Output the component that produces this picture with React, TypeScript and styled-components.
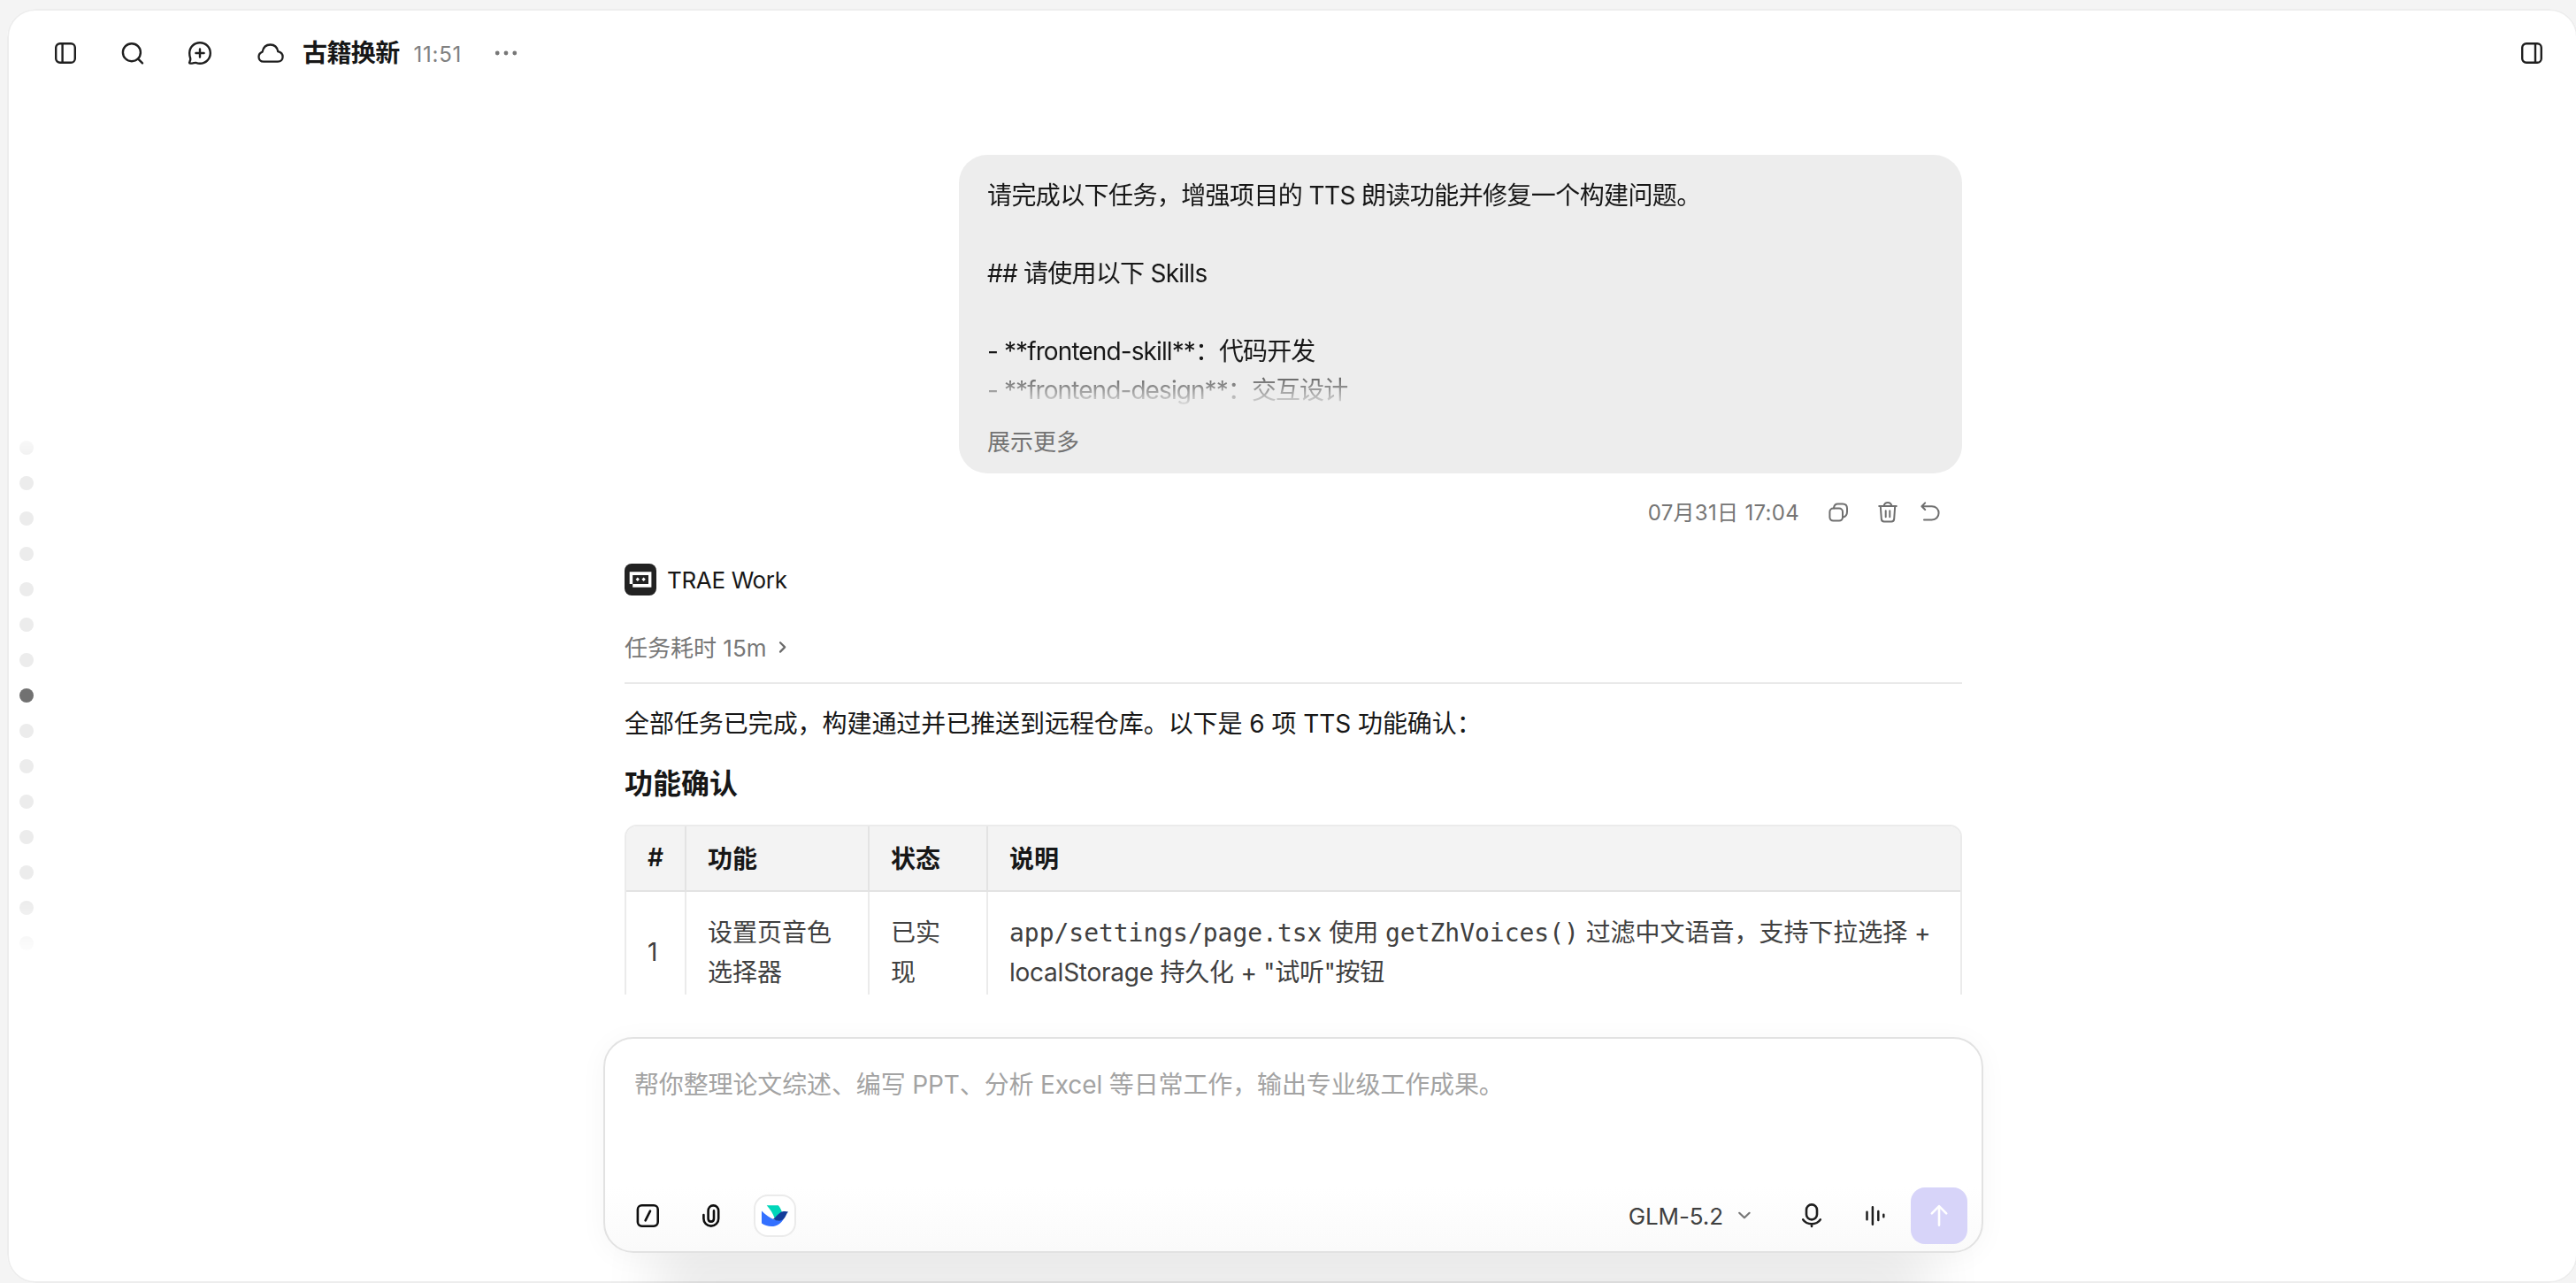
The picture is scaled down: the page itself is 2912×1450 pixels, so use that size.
import React from "react";
import styled, { createGlobalStyle, css } from "styled-components";

const GlobalStyle = createGlobalStyle`
  * { box-sizing: border-box; }
  body {
    margin: 0;
    background: #f4f4f4;
    font-family: Inter, "Noto Sans CJK SC", sans-serif;
    color: #171717;
  }
`;

const Page = styled.div`
  width: 2912px;
  height: 1450px;
  padding: 10px 0 0 8px;
  overflow: hidden;
  background: #f4f4f4;
`;

const Panel = styled.main`
  position: relative;
  display: flex;
  flex-direction: column;
  width: 2906px;
  height: 1440px;
  border-radius: 32px;
  overflow: hidden;
  background: #fff;
  &::after {
    content: "";
    position: absolute;
    inset: 0;
    border: 2px solid rgba(0, 0, 0, 0.07);
    border-radius: 32px;
    pointer-events: none;
  }
`;

const Header = styled.header`
  display: flex;
  align-items: center;
  justify-content: space-between;
  height: 100px;
  padding: 0 38px 0 52px;
`;

const Group = styled.div<{ $gap: number }>`
  display: flex;
  align-items: center;
  gap: ${(p) => p.$gap}px;
`;

const IconButton = styled.button<{ $size?: number; $color?: string }>`
  display: flex;
  align-items: center;
  justify-content: center;
  flex: none;
  width: ${(p) => p.$size ?? 28}px;
  height: ${(p) => p.$size ?? 28}px;
  padding: 0;
  border: 0;
  background: none;
  color: ${(p) => p.$color ?? "#1f1f1f"};
  svg {
    display: block;
    flex: none;
    overflow: visible;
  }
`;

const TitleBlock = styled.div`
  display: flex;
  align-items: center;
  margin-left: 2px;
`;

const Title = styled.h1`
  margin: 0 16px 0 20px;
  font-size: 28px;
  font-weight: 600;
  line-height: 40px;
  letter-spacing: -0.6px;
  color: #171717;
`;

const Time = styled.span`
  margin-right: 36px;
  padding-top: 4px;
  font-size: 24px;
  line-height: 36px;
  letter-spacing: 0.7px;
  color: #808080;
`;

const Body = styled.div`
  display: grid;
  grid-template-columns: 48px 1fr 46px;
  flex: 1;
`;

const Rail = styled.nav`
  display: flex;
  flex-direction: column;
  gap: 24px;
  height: 584px;
  margin-top: 384px;
  padding: 4px 0 0 14px;
  mask-image: linear-gradient(transparent -16px, #000 36px, #000 524px, transparent 590px);
`;

const Dot = styled.span<{ $active: boolean }>`
  flex: none;
  width: 16px;
  height: 16px;
  border-radius: 50%;
  background: ${(p) => (p.$active ? "#717171" : "#ececec")};
`;

const Column = styled.div`
  display: flex;
  flex-direction: column;
  align-items: center;
`;

const Thread = styled.section`
  display: flex;
  flex-direction: column;
  flex: none;
  width: 1512px;
  height: 1014px;
  padding-top: 65px;
  overflow: hidden;
`;

const Bubble = styled.article`
  align-self: flex-end;
  flex: none;
  width: 1134px;
  height: 360px;
  padding: 24px 32px;
  border-radius: 32px;
  background: #ededed;
`;

const BubbleText = styled.div`
  height: 264px;
  overflow: hidden;
  font-size: 28px;
  line-height: 44px;
  mask-image: linear-gradient(#000 207px, transparent 263px);
`;

const Line = styled.div<{ $tracking: number }>`
  height: 44px;
  letter-spacing: ${(p) => p.$tracking}px;
  white-space: pre;
`;

const ShowMore = styled.button`
  display: block;
  margin-top: 17px;
  padding: 0;
  border: 0;
  background: none;
  font: inherit;
  font-size: 26px;
  line-height: 40px;
  color: #737373;
`;

const Meta = styled.div`
  display: flex;
  align-items: center;
  justify-content: flex-end;
  flex: none;
  height: 44px;
  margin-top: 22px;
  padding-right: 24px;
  font-size: 24px;
  letter-spacing: 0.3px;
  color: #757575;
  > span {
    padding-bottom: 3px;
  }
  > button:nth-of-type(1),
  > button:nth-of-type(2) {
    margin-left: 32px;
  }
  > button:nth-of-type(3) {
    margin-left: 24px;
  }
`;

const Agent = styled.div`
  display: flex;
  align-items: center;
  flex: none;
  gap: 12px;
  height: 36px;
  margin-top: 36px;
  font-size: 26px;
  letter-spacing: -0.35px;
`;

const Elapsed = styled.div`
  display: flex;
  align-items: center;
  flex: none;
  gap: 13px;
  height: 40px;
  margin-top: 39px;
  font-size: 26px;
  color: #777;
  > span {
    padding-bottom: 3px;
  }
`;

const Divider = styled.hr`
  flex: none;
  width: 100%;
  height: 2px;
  margin: 19px 0 0;
  border: 0;
  background: #e9e9e9;
`;

const Paragraph = styled.p`
  margin: 23px 0 0;
  font-size: 28px;
  line-height: 45px;
  letter-spacing: -0.06px;
`;

const Heading = styled.h3`
  margin: 23px 0 0;
  font-size: 32px;
  font-weight: 600;
  line-height: 44px;
`;

const TableFrame = styled.div`
  flex: none;
  margin-top: 24px;
  border: 2px solid #ebebeb;
  border-radius: 14px;
  overflow: hidden;
`;

const Table = styled.table`
  width: 100%;
  table-layout: fixed;
  border-collapse: separate;
  border-spacing: 0;
  font-size: 28px;
`;

const Col = styled.col<{ $width?: number }>`
  ${(p) => p.$width && css`width: ${p.$width}px;`}
`;

const HeadCell = styled.th`
  height: 74px;
  padding: 0 24px 2px;
  border-right: 2px solid #e3e3e3;
  border-bottom: 2px solid #e3e3e3;
  background: #f3f3f3;
  font-weight: 600;
  text-align: left;
  &:last-child {
    border-right: 0;
  }
`;

const Cell = styled.td`
  padding: 24px 18px 24px 24px;
  border-right: 2px solid #ebebeb;
  line-height: 44.8px;
  color: #404040;
  &:last-child {
    border-right: 0;
  }
  &:nth-child(3) {
    padding-right: 26px;
  }
`;

const CellLine = styled.div<{ $tracking?: number }>`
  height: 44.8px;
  letter-spacing: ${(p) => p.$tracking ?? 0}px;
  white-space: nowrap;
`;

const Code = styled.code`
  font-family: "DejaVu Sans Mono", monospace;
  font-size: 28px;
  line-height: 1;
`;

const Composer = styled.section`
  display: flex;
  flex-direction: column;
  justify-content: space-between;
  flex: none;
  width: 1560px;
  height: 244px;
  margin-top: 48px;
  padding: 30px 16px 8px 34px;
  border: 2px solid #e2e2e2;
  border-radius: 34px;
  background: linear-gradient(#fff 70%, #fafafa);
  box-shadow:
    0 4px 32px rgba(0, 0, 0, 0.04),
    0 160px 64px -60px rgba(0, 0, 0, 0.08);
`;

const Placeholder = styled.div`
  margin-left: -1px;
  font-size: 28px;
  line-height: 44px;
  letter-spacing: -0.13px;
  color: #a3a3a3;
`;

const Toolbar = styled.div`
  display: flex;
  align-items: center;
  justify-content: space-between;
`;

const Tools = styled.div`
  display: flex;
  align-items: center;
`;

const Attach = styled(IconButton)`
  margin: 0 34px 0 44px;
`;

const AppButton = styled.button`
  display: flex;
  align-items: center;
  justify-content: center;
  width: 48px;
  height: 48px;
  padding: 0;
  border: 2px solid #ebebeb;
  border-radius: 16px;
  background: #fff;
`;

const Model = styled.button`
  display: flex;
  align-items: center;
  gap: 14px;
  margin-right: 52px;
  padding: 0;
  border: 0;
  background: none;
  font: inherit;
  font-size: 26px;
  letter-spacing: -0.1px;
  color: #404040;
`;

const Voice = styled(IconButton)`
  margin: 0 26px 0 44px;
`;

const Send = styled.button`
  display: flex;
  align-items: center;
  justify-content: center;
  width: 64px;
  height: 64px;
  padding: 0;
  border: 0;
  border-radius: 16px;
  background: #d7d4f9;
`;

const Stroke = ({ size = 28, w = 2.4, color = "currentColor", children }: {
  size?: number; w?: number; color?: string; children: React.ReactNode;
}) => (
  <svg width={size} height={size} viewBox={`0 0 ${size} ${size}`} fill="none" stroke={color}
    strokeWidth={w} strokeLinecap="round" strokeLinejoin="round">
    {children}
  </svg>
);

const SidebarIcon = ({ lineX }: { lineX: number }) => (
  <Stroke><rect x="3.2" y="3.2" width="21.6" height="21.6" rx="4.6" /><path d={`M${lineX} 3.2v21.6`} /></Stroke>
);

const SearchIcon = () => (
  <Stroke><circle cx="12.9" cy="13.2" r="10" /><path d="M20.200 20.600l4.800 4.800" /></Stroke>
);

const NewChatIcon = () => (
  <Stroke>
    <path d="M14 2.2c6.6 0 11.8 5.2 11.8 11.8S20.6 25.8 14 25.8c-1.6 0-3-.3-4.2-.8-1.7-.5-2.7.6-4.7.6H3c-.8 0-1.1-.7-.8-1.3.6-1.3 1.4-2.8 1-4.3C2.4 18 2.2 16 2.2 14 2.2 7.4 7.4 2.2 14 2.2z" />
    <path d="M14 9.4v9.2M9.4 14h9.2" />
  </Stroke>
);

const CloudIcon = () => (
  <svg width="32" height="24" viewBox="0 0 32 24" fill="none" stroke="#1f1f1f" strokeWidth="2.3" strokeLinejoin="round">
    <path d="M8 21.6C4.7 21.6 2.5 19.3 2.5 16.2c0-2.8 1.8-4.7 4.1-5.6C7.6 5.4 11 2.5 15.6 2.5c4.6 0 7.8 2.9 8.6 7.7 3.2.8 5.4 3 5.4 6 0 3.2-2.3 5.4-5.6 5.4z" />
  </svg>
);

const DotsIcon = () => (
  <svg width="28" height="28" viewBox="0 0 28 28" fill="#777">
    <circle cx="4.2" cy="14" r="2.4" /><circle cx="14" cy="14" r="2.4" /><circle cx="23.8" cy="14" r="2.4" />
  </svg>
);

const CopyIcon = () => (
  <Stroke size={24} w={2}>
    <rect x="2.4" y="7.6" width="14.6" height="14" rx="4" />
    <path d="M7 7.4C7.2 4.400 8.800 2.600 11.600 2.600h5.400c3 0 5 2 5 5v3.800c0 3-1.600 5.400-4.800 6.200" />
  </Stroke>
);

const TrashIcon = () => (
  <Stroke size={24} w={2}>
    <path d="M2.200 5h19.600M7.600 4.600C8.200 2.400 9.800 1 12 1s3.800 1.400 4.400 3.600M3.800 5l1 14.400c.1 1.900 1.200 3 3 3h8.400c1.800 0 2.900-1.100 3-3l1-14.400M9.700 10.200v7M14.300 10.200v7" />
  </Stroke>
);

const UndoIcon = () => (
  <Stroke size={24} w={2}>
    <path d="M6.200 1.400L2.400 5.200l3.800 3.800M2.600 5.200h11.200c4.600 0 7.800 3.200 7.800 7.600s-3.200 7.600-7.800 7.600H5" />
  </Stroke>
);

const AgentLogo = () => (
  <svg width="36" height="36" viewBox="0 0 36 36">
    <rect width="36" height="36" rx="8" fill="#222" />
    <path fill="#fff" fillRule="evenodd" d="M5.700 9.300h24.700v17.400H9.200V23H5.700zM9.200 13v10H27V13z" />
    <path fill="#fff" d="M14.800 15.600l2.200 2.200-2.200 2.200-2.200-2.200zM21.600 15.600l2.200 2.200-2.200 2.200-2.200-2.200z" />
  </svg>
);

const ChevronRight = () => (
  <svg width="12" height="16" viewBox="0 0 12 16" fill="none" stroke="#6b6b6b" strokeWidth="2.2" strokeLinecap="round" strokeLinejoin="round">
    <path d="M3 2.200l5.200 5.200L3 12.600" />
  </svg>
);

const SlashIcon = () => (
  <Stroke w={2.6}><rect x="2.900" y="2.300" width="22.800" height="23.400" rx="4.600" /><path d="M17 8.600l-5.400 10.800" /></Stroke>
);

const ClipIcon = () => (
  <Stroke w={2.6}>
    <path d="M5.400 13v4.200c0 4.800 3.600 8.400 8.400 8.400s8.400-3.600 8.400-8.400V8.600c0-3.600-2.400-6.200-5.800-6.200S10.600 5 10.600 8.600v8.600c0 2 1.400 3.400 3.200 3.400s3.200-1.400 3.200-3.400V8.400" />
  </Stroke>
);

const BirdLogo = () => (
  <svg width="30" height="24" viewBox="0 0 30 24">
    <path fill="#00d6b9" d="M5.700.2h13.100c2 2.300 3.400 5 4.200 8l-8 7.200C12.800 9.600 9.800 4.600 5.700.2z" />
    <path fill="#3370ff" d="M0 6.600c4.600 4.600 9.400 8 14.600 9.800 4 1.400 7.400.8 10.400-1.200C22 21 17.200 24 11.200 24 6.800 24 3 22.800 0 20.600z" />
    <path fill="#133c9a" d="M13 15.800c3.200-2.400 4.800-5 8-7.300 2.600-1.800 5.800-1.900 9-1.100-2.400 2.600-2.800 5.800-5 8.200-3 2.800-7.600 2.600-12 .2z" />
  </svg>
);

const ChevronDown = () => (
  <svg width="20" height="20" viewBox="0 0 20 20" fill="none" stroke="#777" strokeWidth="2.200" strokeLinecap="round" strokeLinejoin="round">
    <path d="M4.200 6.800l5.700 5.400 5.700-5.400" />
  </svg>
);

const MicIcon = () => (
  <Stroke w={2.6}>
    <rect x="8" y="1.400" width="12" height="17" rx="6" />
    <path d="M4.200 18.400c2 3 5.600 4.800 9.800 4.800s7.800-1.800 9.800-4.800M14 23.400v2.600" />
  </Stroke>
);

const WaveIcon = () => (
  <Stroke w={2.5}><path d="M4.500 9.800v8.400M10.900 4.200v19.600M17.300 9v10M23.300 12.800v2.400" /></Stroke>
);

const ArrowUp = () => (
  <Stroke w={2.6} color="#fff"><path d="M14 3.400v21.400M5.800 11.400L14 3.200l8.200 8.200" /></Stroke>
);

const message = [
  { text: "请完成以下任务，增强项目的 TTS 朗读功能并修复一个构建问题。", tracking: -0.6 },
  { text: "", tracking: 0 },
  { text: "## 请使用以下 Skills", tracking: -0.75 },
  { text: "", tracking: 0 },
  { text: "- **frontend-skill**：代码开发", tracking: -0.9 },
  { text: "- **frontend-design**：交互设计", tracking: -0.92 },
];

const headings = ["#", "功能", "状态", "说明"];
const turns = Array.from({ length: 15 }, (_, i) => i);

export default function App() {
  return (
    <Page lang="zh-CN">
      <GlobalStyle />
      <Panel>
        <Header>
          <Group $gap={48}>
            <IconButton aria-label="侧边栏"><SidebarIcon lineX={10.6} /></IconButton>
            <IconButton aria-label="搜索"><SearchIcon /></IconButton>
            <IconButton aria-label="新建会话"><NewChatIcon /></IconButton>
            <TitleBlock>
              <CloudIcon />
              <Title>古籍换新</Title>
              <Time>11:51</Time>
              <IconButton aria-label="更多"><DotsIcon /></IconButton>
            </TitleBlock>
          </Group>
          <IconButton aria-label="右侧面板"><SidebarIcon lineX={18} /></IconButton>
        </Header>
        <Body>
          <Rail>
            {turns.map((i) => <Dot key={i} $active={i === 7} />)}
          </Rail>
          <Column>
            <Thread>
              <Bubble>
                <BubbleText>
                  {message.map((line, i) => <Line key={i} $tracking={line.tracking}>{line.text}</Line>)}
                </BubbleText>
                <ShowMore>展示更多</ShowMore>
              </Bubble>
              <Meta>
                <span>07月31日 17:04</span>
                <IconButton $size={24} $color="#6f6f6f" aria-label="复制"><CopyIcon /></IconButton>
                <IconButton $size={24} $color="#6f6f6f" aria-label="删除"><TrashIcon /></IconButton>
                <IconButton $size={24} $color="#6f6f6f" aria-label="撤销"><UndoIcon /></IconButton>
              </Meta>
              <Agent><AgentLogo /><span>TRAE Work</span></Agent>
              <Elapsed><span>任务耗时 15m</span><ChevronRight /></Elapsed>
              <Divider />
              <Paragraph>全部任务已完成，构建通过并已推送到远程仓库。以下是 6 项 TTS 功能确认：</Paragraph>
              <Heading>功能确认</Heading>
              <TableFrame>
                <Table>
                  <colgroup>
                    <Col $width={68} /><Col $width={207} /><Col $width={134} /><Col />
                  </colgroup>
                  <thead>
                    <tr>{headings.map((h) => <HeadCell key={h}>{h}</HeadCell>)}</tr>
                  </thead>
                  <tbody>
                    <tr>
                      <Cell>1</Cell>
                      <Cell><CellLine>设置页音色</CellLine><CellLine>选择器</CellLine></Cell>
                      <Cell><CellLine>已实</CellLine><CellLine>现</CellLine></Cell>
                      <Cell>
                        <CellLine $tracking={-0.03}>
                          <Code>app/settings/page.tsx</Code> 使用 <Code>getZhVoices()</Code> 过滤中文语音，支持下拉选择 +
                        </CellLine>
                        <CellLine $tracking={-0.24}>localStorage 持久化 + "试听"按钮</CellLine>
                      </Cell>
                    </tr>
                  </tbody>
                </Table>
              </TableFrame>
            </Thread>
            <Composer>
              <Placeholder>帮你整理论文综述、编写 PPT、分析 Excel 等日常工作，输出专业级工作成果。</Placeholder>
              <Toolbar>
                <Tools>
                  <IconButton $color="#0f0f0f" aria-label="指令"><SlashIcon /></IconButton>
                  <Attach $color="#0f0f0f" aria-label="附件"><ClipIcon /></Attach>
                  <AppButton aria-label="飞书"><BirdLogo /></AppButton>
                </Tools>
                <Tools>
                  <Model><span>GLM-5.2</span><ChevronDown /></Model>
                  <IconButton aria-label="语音输入"><MicIcon /></IconButton>
                  <Voice aria-label="语音通话"><WaveIcon /></Voice>
                  <Send aria-label="发送"><ArrowUp /></Send>
                </Tools>
              </Toolbar>
            </Composer>
          </Column>
        </Body>
      </Panel>
    </Page>
  );
}
